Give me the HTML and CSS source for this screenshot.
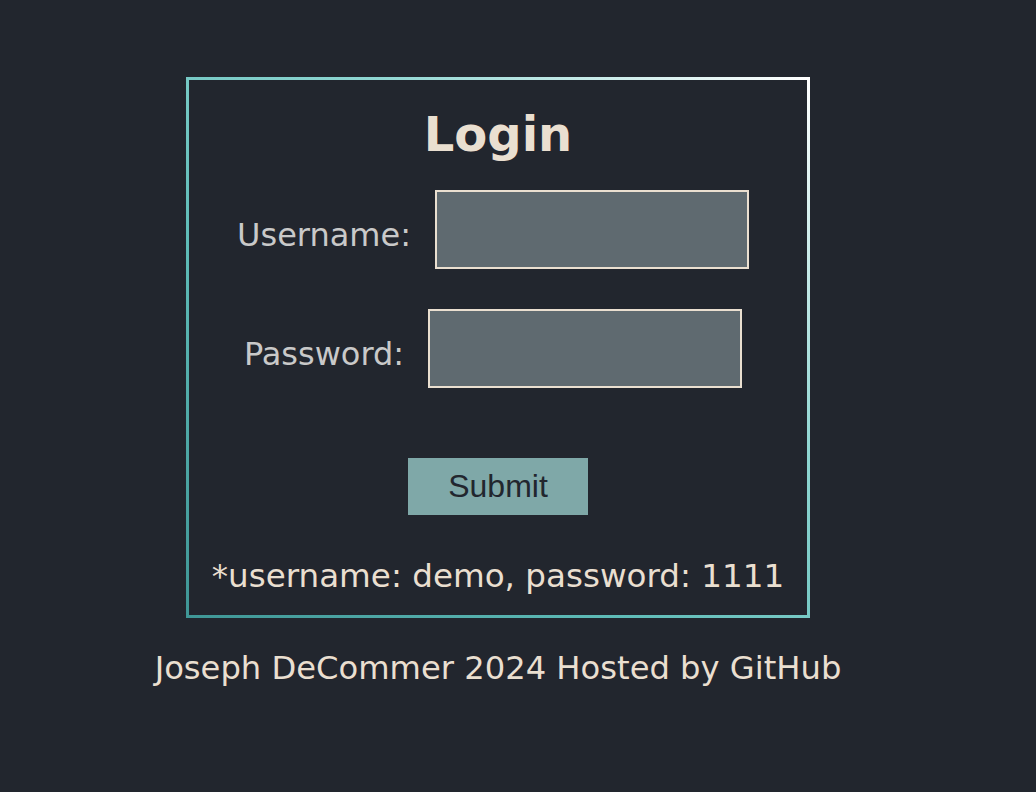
FILE: index.html
```html
<!DOCTYPE html>
<html lang="en">
<head>
<meta charset="utf-8">
<title>Login</title>
<link rel="stylesheet" href="styles.css">
</head>
<body>
<div class="page">
  <form class="login-box">
    <h1 class="title">Login</h1>
    <div class="field">
      <label class="label" for="username">Username:</label>
      <input class="input" id="username" type="text">
    </div>
    <div class="field field-password">
      <label class="label" for="password">Password:</label>
      <input class="input" id="password" type="password">
    </div>
    <button class="submit" type="button">Submit</button>
    <p class="hint">*username: demo, password: 1111</p>
  </form>
  <footer class="footer">Joseph DeCommer 2024 Hosted by GitHub</footer>
</div>
</body>
</html>
```
FILE: styles.css
```css
html, body {
  margin: 0;
  padding: 0;
  background: #22262e;
}
body {
  padding: 8px;
  font-family: "DejaVu Sans", Verdana, sans-serif;
  color: #eadfd0;
}
.page {
  width: 980px;
  display: flex;
  flex-direction: column;
  align-items: center;
  padding-top: 69px;
}
.login-box {
  width: 618px;
  box-sizing: content-box;
  border: 3px solid;
  border-image: linear-gradient(to top right, #3f9696 0%, #5fbcb8 35%, #8fd6d2 65%, #ffffff 100%) 1;
  display: flex;
  flex-direction: column;
  align-items: center;
  padding: 26px 0 20px;
  margin: 0;
}
.title {
  margin: 0;
  font-size: 48px;
  line-height: 56px;
  font-weight: bold;
  color: #eadfd0;
}
.field {
  display: flex;
  align-items: center;
  gap: 24px;
  margin-top: 28px;
  padding-right: 10px;
}
.field-password {
  margin-top: 40px;
}
.label {
  font-size: 32px;
  line-height: 37px;
  color: #c9c9c9;
  padding-top: 12px;
}
.input {
  width: 314px;
  height: 79px;
  box-sizing: border-box;
  margin: 0;
  border: 2px solid #eadfd0;
  background: #5f6a70;
  color: #eadfd0;
  font-size: 24px;
  padding: 0 8px;
  outline: none;
}
.submit {
  margin-top: 70px;
  width: 180px;
  height: 57px;
  border: none;
  background: #7fa8a8;
  color: #22262e;
  font-family: "Liberation Sans", Arial, sans-serif;
  font-size: 32px;
  padding: 0;
}
.hint {
  margin: 42px 0 0;
  font-size: 32.6px;
  line-height: 38px;
  color: #eadfd0;
}
.footer {
  margin-top: 32px;
  font-size: 32.2px;
  line-height: 37px;
  color: #eadfd0;
}
```
